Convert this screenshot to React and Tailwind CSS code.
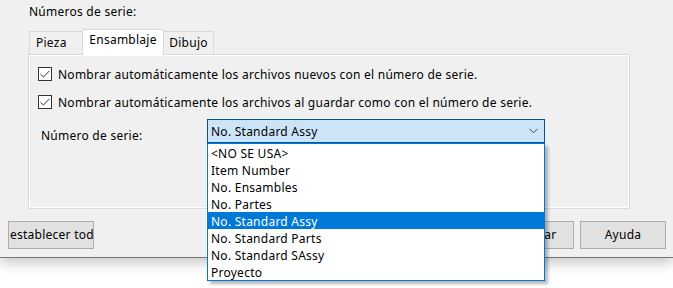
import { useState } from "react";

const items = [
  "<NO SE USA>",
  "Item Number",
  "No. Ensambles",
  "No. Partes",
  "No. Standard Assy",
  "No. Standard Parts",
  "No. Standard SAssy",
  "Proyecto",
];

function Check({ label }) {
  return (
    <div className="flex items-center h-[16px]">
      <div className="w-[14px] h-[14px] border border-[#333333] bg-white flex items-center justify-center">
        <svg width="12" height="12" viewBox="0 0 12 12">
          <path d="M1.5 6.2 L4.4 9 L10.5 2.8" fill="none" stroke="#333" strokeWidth="1" />
        </svg>
      </div>
      <span className="ml-[6px] pt-[2px]">{label}</span>
    </div>
  );
}

function Button({ children, className = "" }) {
  return (
    <div className={"w-[86px] h-[28px] bg-[#e1e1e1] border border-[#adadad] flex items-center " + className}>
      {children}
    </div>
  );
}

export default function App() {
  const [selected] = useState("No. Standard Assy");

  return (
    <div className="w-[673px] h-[288px] bg-white overflow-hidden text-[12px] leading-[16px] tracking-[0.25px] text-black font-['Noto_Sans',sans-serif]">

      {/* dialog */}
      <div className="h-[258px] bg-[#f0f0f0] border-b border-[#767676] shadow-[0_5px_12px_rgba(0,0,0,0.22)] pl-[8px] pr-[7px]">

        <div className="pl-[20px]">
          <div className="pt-[4px] pl-px">Números de serie:</div>

          {/* tabs */}
          <div className="mt-[9px] ml-px flex items-end h-[25px]">
            <div className="w-[53px] h-[23px] border-t border-l border-[#d9d9d9] pl-[6px] pt-[3px]">Pieza</div>
            <div className="relative z-10 w-[82px] h-[26px] -mb-px bg-white border-t border-l border-r border-[#d9d9d9] flex justify-center pt-[2px]">Ensamblaje</div>
            <div className="w-[50px] h-[23px] border-t border-r border-[#d9d9d9] flex justify-center pt-[3px]">Dibujo</div>
          </div>

          {/* panel */}
          <div className="w-[602px] h-[155px] border border-[#dadada] shadow-[inset_1px_1px_0_#ffffff,inset_-1px_-1px_0_#ffffff] pl-[9px] pt-[11px]">
            <Check label="Nombrar automáticamente los archivos nuevos con el número de serie." />
            <div className="mt-[12px]">
              <Check label="Nombrar automáticamente los archivos al guardar como con el número de serie." />
            </div>

            <div className="mt-[9px] flex items-start">
              <div className="w-[169px] pl-[3px] mt-[9px]">Número de serie:</div>

              <div className="relative">
                <div className="w-[338px] h-[24px] bg-[#cce4f7] border border-[#005499] flex items-center justify-between pl-[3px] pr-[6px]">
                  <span className="pt-[2px]">{selected}</span>
                  <svg width="9" height="6" viewBox="0 0 9 6">
                    <path d="M0.5 0.8 L4.5 4.8 L8.5 0.8" fill="none" stroke="#444" strokeWidth="1" />
                  </svg>
                </div>

                {/* open list */}
                <div className="absolute left-0 top-full z-20 w-[338px] bg-white border border-[#0078d7] shadow-[3px_3px_3px_rgba(0,0,0,0.28)]">
                  {items.map((it) => (
                    <div
                      key={it}
                      className={
                        "h-[17px] leading-[17px] pl-[3px] pt-px " +
                        (it === selected ? "bg-[#0078d7] text-white" : "")
                      }
                    >
                      {it}
                    </div>
                  ))}
                </div>
              </div>
            </div>
          </div>
        </div>

        {/* buttons */}
        <div className="mt-[12px] flex justify-between">
          <Button className="justify-start pl-px overflow-hidden whitespace-nowrap">establecer tod</Button>
          <div className="flex gap-[6px]">
            <Button className="justify-center">Aceptar</Button>
            <Button className="justify-center">Cancelar</Button>
            <Button className="justify-center">Ayuda</Button>
          </div>
        </div>
      </div>
    </div>
  );
}
